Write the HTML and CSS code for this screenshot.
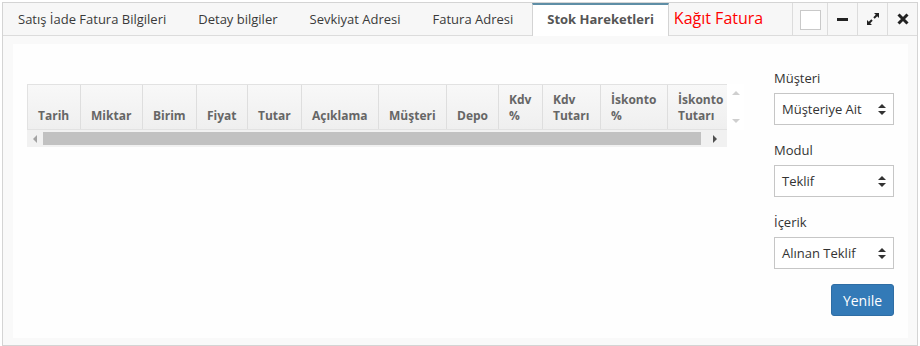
FILE: index.html
```html
<!DOCTYPE html>
<html lang="tr">
<head>
    <meta charset="UTF-8">
    <title>Stok Hareketleri</title>
    <link rel="stylesheet" href="styles.css">
</head>
<body>
<div class="window">
    <div class="tabBar">
        <ul class="tabs">
            <li>Satış İade Fatura Bilgileri</li>
            <li>Detay bilgiler</li>
            <li>Sevkiyat Adresi</li>
            <li>Fatura Adresi</li>
            <li class="current">Stok Hareketleri</li>
        </ul>
        <span class="paperTitle">Kağıt Fatura</span>
        <div class="tools">
            <span class="tool check"><i class="box"></i></span>
            <span class="tool">
                <svg width="12" height="12" viewBox="0 0 12 12"><rect x="0" y="5" width="11" height="3" fill="#222"/></svg>
            </span>
            <span class="tool">
                <svg width="14" height="14" viewBox="0 0 14 14">
                    <path d="M13 1 L8 1 L9.8 2.8 L7.3 5.3 L8.7 6.7 L11.2 4.2 L13 6 Z" fill="#222"/>
                    <path d="M1 13 L6 13 L4.2 11.2 L6.7 8.7 L5.3 7.3 L2.8 9.8 L1 8 Z" fill="#222"/>
                </svg>
            </span>
            <span class="tool">
                <svg width="12" height="12" viewBox="0 0 12 12"><path d="M1.5 1.5 L10.5 10.5 M10.5 1.5 L1.5 10.5" stroke="#222" stroke-width="3"/></svg>
            </span>
        </div>
    </div>

    <div class="content">
        <div class="panel">
            <div class="grid">
                <div class="gridMain">
                    <div class="gridHead">
                        <div class="cells">
                            <div class="cell" style="width:53px">Tarih</div>
                            <div class="cell" style="width:62px">Miktar</div>
                            <div class="cell" style="width:54px">Birim</div>
                            <div class="cell" style="width:51px">Fiyat</div>
                            <div class="cell" style="width:54px">Tutar</div>
                            <div class="cell" style="width:77px">Açıklama</div>
                            <div class="cell" style="width:68px">Müşteri</div>
                            <div class="cell" style="width:52px">Depo</div>
                            <div class="cell" style="width:44px">Kdv<br>%</div>
                            <div class="cell" style="width:58px">Kdv<br>Tutarı</div>
                            <div class="cell" style="width:67px">İskonto<br>%</div>
                            <div class="cell" style="width:70px">İskonto<br>Tutarı</div>
                        </div>
                    </div>
                    <div class="vScroll">
                        <i class="arrowUp"></i>
                        <i class="arrowDown"></i>
                    </div>
                </div>
                <div class="hScroll">
                    <i class="arrowLeft"></i>
                    <div class="thumb"></div>
                    <i class="arrowRight"></i>
                </div>
            </div>

            <div class="side">
                <div class="field">
                    <label>Müşteri</label>
                    <div class="select">Müşteriye Ait<i class="updown"></i></div>
                </div>
                <div class="field">
                    <label>Modul</label>
                    <div class="select">Teklif<i class="updown"></i></div>
                </div>
                <div class="field">
                    <label>İçerik</label>
                    <div class="select">Alınan Teklif<i class="updown"></i></div>
                </div>
                <div class="btnRow">
                    <button class="btn">Yenile</button>
                </div>
            </div>
        </div>
    </div>
</div>
</body>
</html>
```

FILE: styles.css
```css
*{
    margin: 0;
    padding: 0;
    box-sizing: border-box;
}
ul,li{
    list-style: none;
}
body{
    padding: 2px 2px 0 2px;
    background-color: #fff;
    font-family: "Open Sans", "Liberation Sans", sans-serif;
    font-size: 13px;
    color: #333;
}
.window{
    width: 916px;
    height: 344px;
    border: 1px solid #d4d4d4;
    display: flex;
    flex-direction: column;
}
/*上方标签栏*/
.tabBar{
    height: 33px;
    background-color: #f7f7f7;
    border-bottom: 1px solid #dcdcdc;
    display: flex;
    align-items: stretch;
}
.tabBar .tabs{
    display: flex;
}
.tabBar .tabs li{
    padding: 0 16px;
    line-height: 32px;
    color: #3a3a3a;
    white-space: nowrap;
}
.tabBar .tabs li:first-child{
    padding-left: 15px;
}
.tabBar .tabs li.current{
    background-color: #fff;
    border-top: 2px solid #5e8ea6;
    border-left: 1px solid #d4d4d4;
    border-right: 1px solid #d4d4d4;
    height: 33px;
    line-height: 29px;
    font-weight: bold;
    color: #555;
    padding: 0 14px 0 14px;
    margin-left: 3px;
}
.tabBar .paperTitle{
    color: #f00;
    font-size: 16px;
    line-height: 30px;
    margin-left: 5px;
}
.tabBar .tools{
    margin-left: auto;
    display: flex;
}
.tabBar .tool{
    width: 30px;
    border-left: 1px solid #dcdcdc;
    display: flex;
    align-items: center;
    justify-content: center;
}
.tabBar .tool.check{
    width: 35px;
}
.tabBar .tool .box{
    display: block;
    width: 21px;
    height: 20px;
    background-color: #fff;
    border: 1px solid #c9c9c9;
    margin-top: 1px;
}
.tabBar .tool svg{
    display: block;
}

/*内容区*/
.content{
    flex: 1;
    background-color: #f9f9f9;
    padding: 8px 9px 7px 10px;
}
.panel{
    height: 100%;
    background-color: #fefefe;
    display: flex;
    padding: 0 14px;
}
.grid{
    margin-top: 40px;
    width: 717px;
    align-self: flex-start;
}
.gridMain{
    display: flex;
}
.gridHead{
    width: 700px;
    height: 46px;
    overflow: hidden;
    border: 1px solid #e2e2e2;
    border-right: 0;
    background: linear-gradient(#f8f8f8, #efefef);
}
.gridHead .cells{
    display: flex;
    height: 100%;
}
.gridHead .cell{
    flex-shrink: 0;
    height: 100%;
    border-right: 1px solid #dedede;
    padding: 0 0 5px 10px;
    display: flex;
    flex-direction: column;
    justify-content: flex-end;
    font-size: 12px;
    font-weight: bold;
    line-height: 16px;
    color: #666;
    white-space: nowrap;
}
.vScroll{
    width: 17px;
    height: 46px;
    background-color: #fff;
    position: relative;
}
.vScroll i{
    position: absolute;
    left: 5px;
    width: 0;
    height: 0;
    border-left: 4px solid transparent;
    border-right: 4px solid transparent;
}
.vScroll .arrowUp{
    top: 7px;
    border-bottom: 4px solid #cfcfcf;
}
.vScroll .arrowDown{
    top: 35px;
    border-top: 4px solid #cfcfcf;
}
.hScroll{
    width: 700px;
    height: 17px;
    background-color: #f1f1f1;
    display: flex;
    align-items: center;
}
.hScroll i{
    width: 0;
    height: 0;
    border-top: 4px solid transparent;
    border-bottom: 4px solid transparent;
}
.hScroll .arrowLeft{
    margin: 0 6px 0 6px;
    border-right: 4px solid #a3a3a3;
}
.hScroll .thumb{
    width: 658px;
    height: 13px;
    background-color: #c1c1c1;
}
.hScroll .arrowRight{
    margin-left: 12px;
    border-left: 4px solid #505050;
}

/*右侧筛选*/
.side{
    margin-left: auto;
    width: 120px;
    padding-top: 25px;
}
.field{
    margin-bottom: 16px;
}
.field label{
    display: block;
    line-height: 18px;
    margin-bottom: 6px;
    color: #333;
}
.select{
    height: 32px;
    border: 1px solid #c6c6c6;
    background-color: #fff;
    padding-left: 7px;
    line-height: 30px;
    color: #333;
    position: relative;
}
.select .updown{
    position: absolute;
    right: 7px;
    top: 10px;
    width: 8px;
    height: 11px;
}
.select .updown::before,
.select .updown::after{
    content: '';
    position: absolute;
    left: 0;
    border-left: 4px solid transparent;
    border-right: 4px solid transparent;
}
.select .updown::before{
    top: 0;
    border-bottom: 4px solid #333;
}
.select .updown::after{
    bottom: 0;
    border-top: 4px solid #333;
}
.btnRow{
    display: flex;
    justify-content: flex-end;
    margin-top: -1px;
}
.btn{
    width: 63px;
    height: 32px;
    background-color: #337ab7;
    border: 1px solid #2e6da4;
    border-radius: 3px;
    color: #fff;
    font-family: "Open Sans", "Liberation Sans", sans-serif;
    font-size: 14px;
}
```
